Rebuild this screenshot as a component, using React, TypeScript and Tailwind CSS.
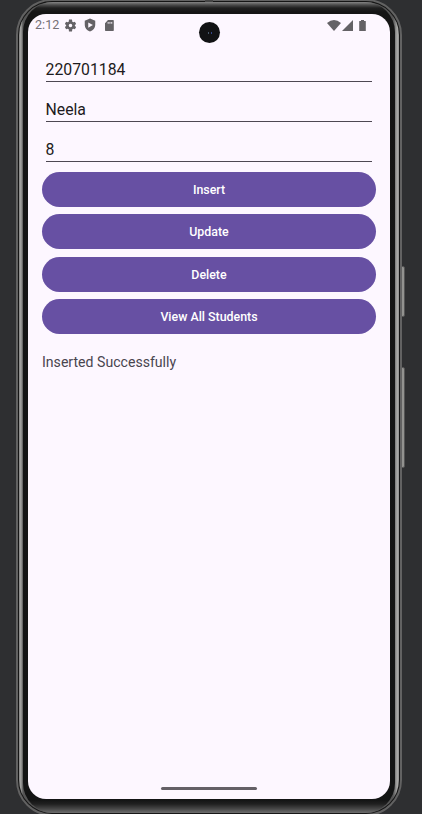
import type { ReactNode } from "react";

function Field({ value, height }: { value: string; height: string }) {
  return (
    <div className={`mx-1 flex items-end border-b border-[#4d4852] text-[15.8px] leading-[19px] text-[#1d1b20] ${height}`}>
      <span className="-ml-[0.5px] mb-[2px]">{value}</span>
    </div>
  );
}

function Action({ children }: { children: ReactNode }) {
  return (
    <button className="h-[35px] w-full shrink-0 rounded-full bg-[#6750a3] text-center text-[12.4px] font-medium leading-[36px] text-white">
      {children}
    </button>
  );
}

function StatusBar() {
  return (
    <div className="flex h-[22px] items-center text-[#646266]">
      <span className="ml-[7px] w-[26px] text-[12.600px] leading-[22px] text-[#747076]">2:12</span>
      <svg className="ml-[3px]" width="13" height="13" viewBox="1 1 22 22" fill="currentColor" fillRule="evenodd">
        <path d="M19.4 13a7.8 7.8 0 0 0 0-2l2.2-1.7-2.2-3.800-2.600 1a8 8 0 0 0-1.800-1L14.600 2H9.400L9 5.500a8 8 0 0 0-1.800 1l-2.600-1-2.200 3.800L4.600 11a7.800 7.800 0 0 0 0 2l-2.200 1.700 2.200 3.800 2.600-1a8 8 0 0 0 1.800 1l.4 3.500h5.200l.4-3.500a8 8 0 0 0 1.800-1l2.600 1 2.200-3.800zM12 15a3 3 0 1 1 0-6 3 3 0 0 1 0 6z" />
      </svg>
      <svg className="ml-[6px]" width="14" height="14" viewBox="0 0 24 24" fill="currentColor" fillRule="evenodd">
        <path d="M12 1 3 4.500V11c0 6 3.800 10.500 9 12 5.200-1.500 9-6 9-12V4.500zM9 7.500l8 4.500-8 4.500z" />
      </svg>
      <svg className="ml-[8px]" width="9" height="11" viewBox="0 0 10 12" fill="currentColor" fillRule="evenodd">
        <path d="M3.300 0H9q.8 0 .8.800V11.200q0 .8-.8.800H.8Q0 12 0 11.200V3.500zM3 2v2h1V2zm2 0v2h1V2zm2 0v2h1V2z" />
      </svg>
      <svg className="ml-[213px]" width="14" height="11" viewBox="0 0 14 11" fill="currentColor">
        <path d="M0 3Q7-3 14 3L7 11z" />
      </svg>
      <svg className="ml-px" width="11" height="11" viewBox="0 0 11 11" fill="currentColor">
        <path d="M11 0v11H0z" />
      </svg>
      <svg className="ml-[6px]" width="7" height="11" viewBox="0 0 7 11" fill="currentColor">
        <path d="M2 0h3v1h1.500l.3.300V11H.2V1.300L.5 1H2z" />
      </svg>
    </div>
  );
}

export default function App() {
  return (
    <div className="relative h-[814px] w-[422px] overflow-hidden bg-[#2e2f31] font-[Roboto,sans-serif]">
      <div className="absolute left-[400px] top-[266px] h-[51px] w-[5px] rounded-r-[2px] border border-[#555] bg-[#92928f]" />
      <div className="absolute left-[400px] top-[367px] h-[101px] w-[5px] rounded-r-[2px] border border-[#555] bg-[#92928f]" />
      <div className="relative -mt-px ml-4 h-[817px] w-[386px] rounded-[36px] border-2 border-[#626262] bg-[#161616] p-px">
        <div className="h-full rounded-[33px] bg-[linear-gradient(90deg,#777_0,#a0a09e_1px,#a0a09e_2px,#555_4px,#555_374px,#777_376px,#a8a8a6_378px,#a8a8a6_379px,#888_380px)] pl-[4px] pr-[4px]">
          <div className="h-full rounded-[30px] bg-[linear-gradient(180deg,#858585_0,#4a4a4a_3px,#202020_6px,#151515_10px,#131414_798px,#202020_802px,#484848_807px,#777_812px)] pl-[5px] pt-[12px]">
            <div className="relative h-[785px] w-[362px] overflow-hidden rounded-[18px] bg-[#fdf7ff]">
              <StatusBar />
              <main className="flex flex-col px-[14px]">
                <Field value="220701184" height="h-[46px]" />
                <Field value="Neela" height="h-[40px]" />
                <Field value="8" height="h-[40px]" />
                <div className="mt-[10px] flex flex-col gap-[7.3px]">
                  <Action>Insert</Action>
                  <Action>Update</Action>
                  <Action>Delete</Action>
                  <Action>View All Students</Action>
                </div>
                <p className="mt-[19px] text-[14.1px] leading-[18px] text-[#49454f]">Inserted Successfully</p>
              </main>
              <div className="absolute left-[171px] top-[8px] flex h-[21px] w-[21px] items-center justify-center gap-[2px] rounded-full bg-[#111214]">
                <i className="h-[2px] w-px bg-[#48586b]" />
                <i className="h-[2px] w-px bg-[#34468a]" />
              </div>
              <div className="absolute left-[133px] top-[773px] h-[3px] w-[96px] rounded-full bg-[#646066]" />
            </div>
          </div>
        </div>
      </div>
      <div className="absolute left-[205px] top-0 h-[2px] w-[8px] bg-[#454545]" />
    </div>
  );
}
